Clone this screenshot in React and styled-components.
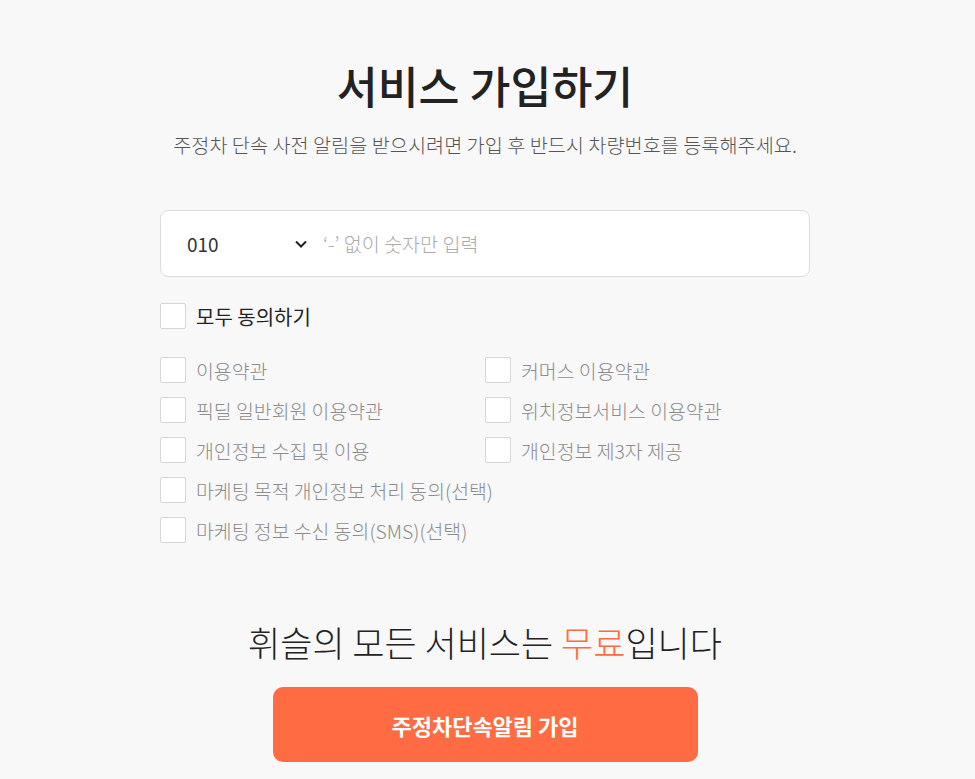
import React from 'react';
import styled, { createGlobalStyle } from 'styled-components';

const Global = createGlobalStyle`
  html, body {
    margin: 0;
    padding: 0;
    background: #f8f8f8;
    font-family: "Noto Sans CJK KR", "Noto Sans", sans-serif;
  }
`;

const Page = styled.div`
  display: flex;
  flex-direction: column;
  align-items: center;
  padding: 52px 5px 0 0;
`;

const Title = styled.h1`
  margin: 0;
  font-size: 44.5px;
  font-weight: 500;
  color: #222;
  line-height: 66px;
`;

const Subtitle = styled.p`
  margin: 14px 0 0 0;
  font-size: 19.7px;
  font-weight: 300;
  color: #555;
  line-height: 26px;
`;

const Form = styled.div`
  width: 650px;
  margin-top: 52px;
`;

const PhoneBox = styled.div`
  height: 65px;
  border: 1px solid #dcdcdc;
  border-radius: 8px;
  background: #fff;
  display: flex;
  align-items: center;
  padding-left: 26px;
`;

const Prefix = styled.div`
  width: 120px;
  display: flex;
  align-items: center;
  justify-content: space-between;
  font-size: 19px;
  color: #333;
  margin-right: 16px;
`;

const Placeholder = styled.span`
  font-size: 19.6px;
  font-weight: 300;
  color: #aaa;
`;

const Row = styled.label`
  display: flex;
  align-items: center;
  gap: 10px;
  height: 40px;
  font-size: ${p => (p.$all ? '20px' : '19.4px')};
  font-weight: ${p => (p.$all ? 400 : 300)};
  color: ${p => (p.$all ? '#222' : '#8c8c8c')};
`;

const Box = styled.span`
  width: 24px;
  height: 24px;
  border: 1px solid #d6d6d6;
  border-radius: 2px;
  background: #fff;
  flex-shrink: 0;
`;

const AllRow = styled(Row)`
  margin-top: 19px;
  margin-bottom: 14px;
`;

const Grid = styled.div`
  display: grid;
  grid-template-columns: 325px 325px;
`;

const Wide = styled.div`
  grid-column: 1 / span 2;
`;

const Free = styled.p`
  margin: 67px 0 0 0;
  font-size: 35px;
  font-weight: 300;
  color: #222;
  line-height: 50px;
  span { color: #ff6b42; }
`;

const Submit = styled.button`
  margin-top: 20px;
  width: 425px;
  height: 75px;
  border: none;
  border-radius: 10px;
  background: #ff6b42;
  color: #fff;
  font-family: inherit;
  font-size: 22px;
  font-weight: 700;
  cursor: pointer;
`;

const items = [
  ['이용약관', '커머스 이용약관'],
  ['픽딜 일반회원 이용약관', '위치정보서비스 이용약관'],
  ['개인정보 수집 및 이용', '개인정보 제3자 제공'],
];

export default function App() {
  return (
    <Page>
      <Global />
      <Title>서비스 가입하기</Title>
      <Subtitle>주정차 단속 사전 알림을 받으시려면 가입 후 반드시 차량번호를 등록해주세요.</Subtitle>
      <Form>
        <PhoneBox>
          <Prefix>
            010
            <svg width="12" height="8" viewBox="0 0 12 8">
              <path d="M1 1.5 L6 6.5 L11 1.5" fill="none" stroke="#222" strokeWidth="2" />
            </svg>
          </Prefix>
          <Placeholder>‘-’ 없이 숫자만 입력</Placeholder>
        </PhoneBox>
        <AllRow $all>
          <Box />
          모두 동의하기
        </AllRow>
        <Grid>
          {items.flat().map(t => (
            <Row key={t}><Box />{t}</Row>
          ))}
          <Wide><Row><Box />마케팅 목적 개인정보 처리 동의(선택)</Row></Wide>
          <Wide><Row><Box />마케팅 정보 수신 동의(SMS)(선택)</Row></Wide>
        </Grid>
      </Form>
      <Free>휘슬의 모든 서비스는 <span>무료</span>입니다</Free>
      <Submit>주정차단속알림 가입</Submit>
    </Page>
  );
}
